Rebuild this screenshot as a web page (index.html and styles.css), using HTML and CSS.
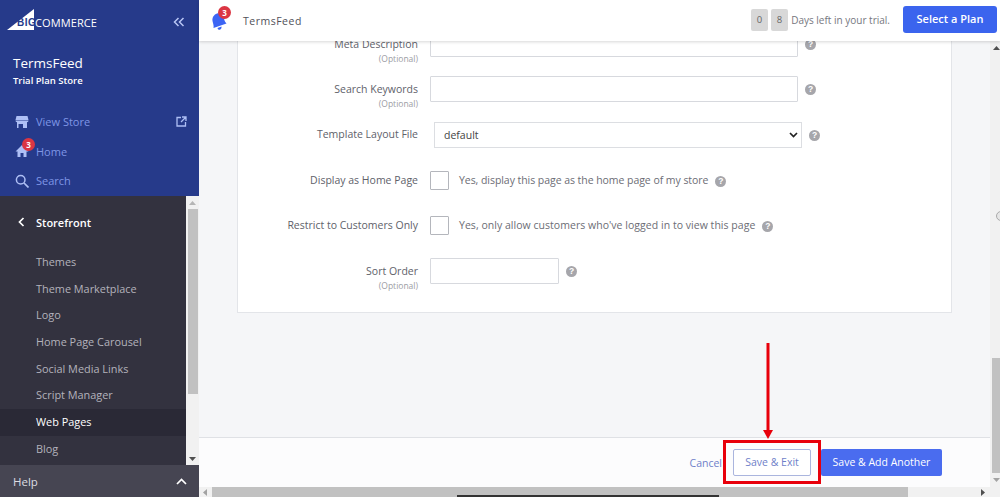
FILE: index.html
```html
<!DOCTYPE html>
<html lang="en">
<head>
<meta charset="utf-8">
<title>Web Pages</title>
<link rel="stylesheet" href="styles.css">
</head>
<body>
<div class="app">
  <aside class="sidebar">
    <div class="blue">
      <div class="brand-row">
        <div class="logo">
          <svg class="logo-mark" width="28" height="21" viewBox="0 0 28 21"><polygon points="0,21 27,0 27,21" fill="#fff"/></svg>
          <span class="logo-big">BIG</span><span class="logo-text">COMMERCE</span>
        </div>
        <svg class="collapse" width="12" height="10" viewBox="0 0 12 10"><path d="M5.500 1 1.500 5l4 4M10.500 1l-4 4 4 4" fill="none" stroke="#b9c6f5" stroke-width="1.500"/></svg>
      </div>
      <div class="store-name">TermsFeed</div>
      <div class="store-plan">Trial Plan Store</div>
      <nav class="blue-nav">
        <a class="blue-item">
          <svg width="14" height="14" viewBox="0 0 14 14"><path d="M1.500 1h11l1 4H.5zM.5 5.500h13c0 1-.7 1.700-1.500 1.700V13H8V9H3.500v4H2V7.200C1.200 7.200.5 6.500.5 5.500z" fill="#aebff5"/></svg>
          <span>View Store</span>
          <svg class="ext" width="11" height="11" viewBox="0 0 11 11"><path d="M5 1.500H1v8.500h8.500V6M6 1h4v4M10 1 5 6" fill="none" stroke="#aebff5" stroke-width="1.300"/></svg>
        </a>
        <a class="blue-item">
          <svg width="14" height="14" viewBox="0 0 14 14"><path d="M7 1 .5 7.500h2V13h3V9h3v4h3V7.500h2z" fill="#aebff5"/></svg>
          <span>Home</span>
          <b class="badge home-badge">3</b>
        </a>
        <a class="blue-item">
          <svg width="14" height="14" viewBox="0 0 14 14"><circle cx="5.700" cy="5.700" r="4.300" fill="none" stroke="#aebff5" stroke-width="1.500"/><path d="M9 9l4.500 4.500" stroke="#aebff5" stroke-width="1.700"/></svg>
          <span>Search</span>
        </a>
      </nav>
    </div>
    <div class="dark">
      <div class="menu-col">
        <div class="menu-head">
          <svg width="7" height="10" viewBox="0 0 7 10"><path d="M5.500 1 1.500 5l4 4" fill="none" stroke="#fff" stroke-width="1.700"/></svg>
          <span>Storefront</span>
        </div>
        <ul class="menu">
          <li>Themes</li>
          <li>Theme Marketplace</li>
          <li>Logo</li>
          <li>Home Page Carousel</li>
          <li>Social Media Links</li>
          <li>Script Manager</li>
          <li class="current">Web Pages</li>
          <li>Blog</li>
        </ul>
      </div>
      <div class="vbar side-bar">
        <svg class="sb-arrow" width="7" height="4" viewBox="0 0 7 4"><path d="M3.500 0 7 4H0z" fill="#b5b5b5"/></svg>
        <div class="thumb"></div>
        <svg class="sb-arrow end" width="7" height="4" viewBox="0 0 7 4"><path d="M0 0h7L3.500 4z" fill="#505050"/></svg>
      </div>
    </div>
    <div class="help">
      <span>Help</span>
      <svg width="11" height="7" viewBox="0 0 11 7"><path d="M1 6l4.500-4.500L10 6" fill="none" stroke="#fff" stroke-width="1.700"/></svg>
    </div>
  </aside>
  <div class="main">
    <header class="topbar">
      <div class="bell-wrap">
        <svg width="16" height="19" viewBox="0 0 16 19"><path d="M6 1.500C9 .5 11.500 2 12.500 5c.8 2.500 1 4.500 3 6.500L2.500 16C3 13.500 2 11.500 1.500 9 1 5.500 3 2.500 6 1.500z M6.500 16l4-1.500c.3 1.500-.4 2.700-1.700 3.200-1.200.4-2-.5-2.300-1.700z" fill="#3c64f4"/></svg>
        <b class="badge bell-badge">3</b>
      </div>
      <span class="top-store">TermsFeed</span>
      <div class="trial">
        <span class="digit">0</span><span class="digit">8</span>
        <span class="trial-text">Days left in your trial.</span>
        <a class="plan">Select a Plan</a>
      </div>
    </header>
    <div class="body-row">
      <div class="content">
        <div class="scroll-area">
          <section class="card">
            <div class="row r-meta">
              <div class="label">Meta Description<small>(Optional)</small></div>
              <div class="input wide"></div>
              <i class="q">?</i>
            </div>
            <div class="row">
              <div class="label">Search Keywords<small>(Optional)</small></div>
              <div class="input wide"></div>
              <i class="q">?</i>
            </div>
            <div class="row r-step">
              <div class="label label-tpl">Template Layout File</div>
              <div class="select">
                <span>default</span>
                <svg width="9" height="6" viewBox="0 0 9 6"><path d="M1 1l3.500 3.500L8 1" fill="none" stroke="#222" stroke-width="1.700"/></svg>
              </div>
              <i class="q">?</i>
            </div>
            <div class="row r-step">
              <div class="label label-check">Display as Home Page</div>
              <div class="check"></div>
              <span class="check-text tight">Yes, display this page as the home page of my store</span>
              <i class="q q-check">?</i>
            </div>
            <div class="row">
              <div class="label label-check">Restrict to Customers Only</div>
              <div class="check"></div>
              <span class="check-text loose">Yes, only allow customers who've logged in to view this page</span>
              <i class="q q-check">?</i>
            </div>
            <div class="row">
              <div class="label">Sort Order<small>(Optional)</small></div>
              <div class="input narrow"></div>
              <i class="q">?</i>
            </div>
          </section>
        </div>
        <footer class="actions">
          <a class="cancel">Cancel</a>
          <a class="btn-outline">Save &amp; Exit</a>
          <a class="btn-solid">Save &amp; Add Another</a>
          <div class="highlight"></div>
          <svg class="arrow" width="14" height="98" viewBox="0 0 14 98"><path d="M7 0v88" stroke="#e8000b" stroke-width="3"/><path d="M2 87h10l-5 9z" fill="#e8000b"/></svg>
        </footer>
      </div>
      <div class="vbar page-bar">
        <svg class="sb-arrow" width="7" height="4" viewBox="0 0 7 4"><path d="M3.500 0 7 4H0z" fill="#505050"/></svg>
        <div class="page-track"></div>
        <div class="page-thumb"></div>
        <svg class="sb-arrow" width="7" height="4" viewBox="0 0 7 4"><path d="M0 0h7L3.500 4z" fill="#a3a3a3"/></svg>
        <span class="page-ring"></span>
      </div>
    </div>
    <div class="hbar">
      <svg width="4" height="7" viewBox="0 0 4 7"><path d="M4 0v7L0 3.500z" fill="#a3a3a3"/></svg>
      <div class="hthumb"><div class="dark-strip"></div></div>
      <svg class="hbar-end" width="4" height="7" viewBox="0 0 4 7"><path d="M0 0v7l4-3.500z" fill="#505050"/></svg>
    </div>
  </div>
</div>
</body>
</html>
```
FILE: styles.css
```css
* { box-sizing: border-box; }
html, body { margin: 0; height: 100%; overflow: hidden; }
body { font-family: "Open Sans", "Liberation Sans", sans-serif; font-size: 11px; color: #5e6068; background: #f5f6f8; }
.app { display: flex; width: 1000px; height: 497px; }

.sidebar { width: 199px; flex: none; display: flex; flex-direction: column; height: 497px; }
.blue { height: 196px; background: #263a8a; flex: none; }
.brand-row { display: flex; align-items: center; justify-content: space-between; height: 44px; padding: 0 14px 0 7px; }
.logo { position: relative; display: flex; align-items: flex-end; width: 92px; height: 21px; margin-top: -5px; }
.logo-mark { position: absolute; left: 0; top: 0; }
.logo-big { position: relative; margin-left: 10px; font: bold 10px/14px "Liberation Sans", sans-serif; color: #263a8a; letter-spacing: .5px; }
.logo-text { position: absolute; left: 28px; bottom: 0; font: 500 11px/14px "Open Sans", sans-serif; color: #fff; letter-spacing: .1px; }
.store-name { color: #fff; font-size: 13.5px; line-height: 20px; padding-left: 13px; margin-top: 9px; }
.store-plan { color: #fff; font-size: 9.5px; font-weight: 600; line-height: 14px; padding-left: 13px; margin-top: 1px; }
.blue-nav { margin-top: 19px; display: flex; flex-direction: column; }
.blue-item { position: relative; display: flex; align-items: center; height: 29.5px; padding: 0 12px 0 15px; color: #7f96e6; font-size: 11px; gap: 7px; }
.blue-item span { flex: 1; }
.badge { position: absolute; background: #db3643; color: #fff; border-radius: 50%; width: 13px; height: 13px; font-size: 8px; line-height: 13px; text-align: center; font-weight: 700; }
.home-badge { left: 22px; top: 1px; }

.dark { flex: 1; min-height: 0; display: flex; background: #33323f; }
.menu-col { flex: 1; min-width: 0; }
.menu-head { display: flex; align-items: center; height: 53px; padding: 0 0 1px 18px; gap: 11px; color: #fff; font-weight: 600; font-size: 11px; }
.menu { list-style: none; margin: 0; padding: 0; }
.menu li { height: 26.7px; line-height: 26px; padding-left: 36px; color: #b3b2bc; font-size: 10.9px; }
.menu li.current { background: #2a2936; color: #fff; }
.vbar { display: flex; flex-direction: column; align-items: center; }
.side-bar { width: 13px; background: #f1f1f1; flex: none; }
.sb-arrow { flex: none; margin: 5px 0 4px; }
.thumb { width: 10px; height: 185px; background: #c1c1c1; }
.sb-arrow.end { margin-top: auto; margin-bottom: 4px; }
.help { height: 32px; flex: none; background: #464552; color: #dcdce2; font-size: 11.5px; display: flex; align-items: center; justify-content: space-between; padding: 0 12px 0 13px; }

.main { flex: 1; min-width: 0; display: flex; flex-direction: column; }
.topbar { position: relative; z-index: 2; height: 41px; flex: none; background: #fff; box-shadow: 0 1px 3px rgba(0,0,0,.16); display: flex; align-items: center; padding: 0 3px 0 12px; }
.bell-wrap { position: relative; width: 32px; height: 24px; padding-top: 3px; }
.bell-badge { left: 7px; top: -3px; }
.top-store { color: #4f5058; font-size: 10.5px; font-weight: 500; letter-spacing: .5px; }
.trial { margin-left: auto; margin-top: -2px; display: flex; align-items: center; gap: 3.5px; }
.digit { width: 16.5px; height: 22px; border-radius: 2px; background: #d8d8d8; color: #666; font-size: 9.5px; line-height: 22px; text-align: center; }
.trial-text { font-size: 10px; color: #767780; margin-right: 9.5px; }
.plan { width: 94px; height: 27px; background: #3b64ee; color: #fff; border-radius: 3px; text-align: center; line-height: 26px; font-size: 11px; font-weight: 600; }

.body-row { flex: 1; min-height: 0; display: flex; }
.content { flex: 1; min-width: 0; display: flex; flex-direction: column; }
.scroll-area { height: 396px; flex: none; overflow: hidden; padding: 0 38px; }
.card { display: flex; flex-direction: column; gap: 19px; background: #fff; border: 1px solid #e3e5e9; border-top: 0; height: 272px; }

.row { display: flex; align-items: flex-start; height: 26px; flex: none; }
.r-meta { margin-top: -10px; }
.r-step { margin-top: 1px; }
.label { width: 180px; text-align: right; color: #60616a; font-size: 10.5px; line-height: 26px; flex: none; }
.label small { display: block; color: #9c9da4; font-size: 8.5px; line-height: 10px; margin-top: -3px; }
.label-tpl { line-height: 25px; }
.label-check { line-height: 25px; margin-top: 0; }
.input { height: 26px; background: #fff; border: 1px solid #d7d9de; border-radius: 1px; margin-left: 12px; }
.input.wide { width: 368px; }
.input.narrow { width: 129px; }
.select { width: 368px; height: 26px; margin-left: 16px; background: #fff; border: 1px solid #dcdee2; display: flex; align-items: center; justify-content: space-between; padding: 0 3px 0 9px; color: #444; font-size: 10.5px; }
.q { width: 11px; height: 11px; border-radius: 50%; background: #a6a6ab; color: #fff; font: bold 8.5px/11px "Liberation Sans", sans-serif; text-align: center; margin: 7.5px 0 0 7px; flex: none; }
.q-check { margin-top: 4.5px; }
.check { width: 19px; height: 19px; margin: 3px 0 0 12px; background: #fff; border: 1px solid #b4b6bc; border-radius: 1px; flex: none; }
.check-text { color: #6c6d75; font-size: 10.5px; line-height: 19px; margin: 3px 0 0 10px; }
.check-text + .q-check { margin-top: 7.5px; }
.tight { letter-spacing: -.05px; }
.loose { letter-spacing: .035px; }

.actions { position: relative; flex: 1; background: #fcfcfd; border-top: 1px solid #dfe1e5; display: flex; align-items: center; justify-content: flex-end; padding: 0 48px 0 0; gap: 10px; }
.cancel { color: #6f7fc9; font-size: 10.5px; margin-right: 1px; }
.btn-outline { width: 78px; height: 27px; border: 1px solid #aab5de; border-radius: 2px; color: #6f7fc9; background: #fff; font-size: 10.5px; line-height: 25px; text-align: center; }
.btn-solid { width: 121px; height: 27px; border-radius: 2px; background: #4a6cef; color: #fff; font-size: 10.5px; line-height: 26px; text-align: center; }
.highlight { position: absolute; left: 524px; top: 2px; width: 98px; height: 44px; border: 3px solid #e8000b; }
.arrow { position: absolute; left: 562px; top: -95px; }

.page-bar { width: 10px; flex: none; background: #f1f1f1; position: relative; overflow: hidden; padding-left: 2px; }
.page-bar .sb-arrow { margin: 5px 0; }
.page-track { flex: 1; }
.page-thumb { width: 8px; height: 115px; background: #c1c1c1; flex: none; }
.page-ring { position: absolute; left: 6px; top: 170px; width: 10px; height: 10px; border-radius: 50%; border: 1px solid #a9a9a9; background: #e6e6e6; }
.hbar { height: 10px; flex: none; background: #f1f1f1; display: flex; align-items: center; padding: 0 15px 0 4px; gap: 5px; }
.hthumb { flex: 0 0 696px; height: 10px; background: #c1c1c1; display: flex; align-items: flex-end; padding-left: 245px; }
.dark-strip { width: 262px; height: 2px; background: #333; }
.hbar-end { margin-left: auto; }
```
